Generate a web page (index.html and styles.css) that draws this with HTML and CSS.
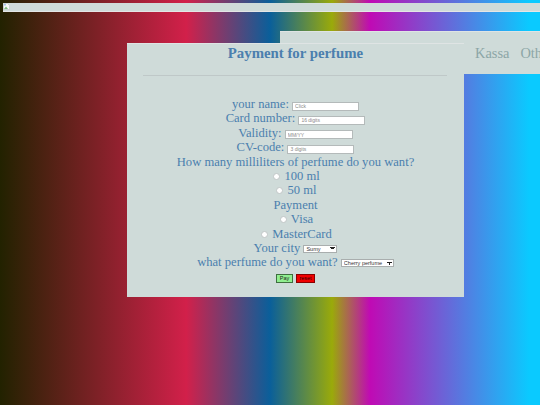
FILE: index.html
```html
<html lang="en">
<head>
    <meta charset="utf-8">
    <link rel="stylesheet" href="styles.css">
</head>
<body>
    <div class="top-bar">
        <!-- broken image icon -->
        <svg class="broken-icon" width="7" height="7" viewBox="0 0 7 7">
            <path d="M0.5 0.5H4.5L6.5 2.5V6.5H0.5Z" fill="#f7f9f7" stroke="#b4bcbc" stroke-width="0.5"/>
            <path d="M1 6L3 3.5L5 6Z" fill="#7dbb7d"/>
            <rect x="1" y="1" width="2" height="1.5" fill="#a5c2ea"/>
        </svg>
    </div>

    <div class="nav-panel">
        <a class="nav-link">Kassa</a>
        <a class="nav-link">Other</a>
    </div>

    <form class="pay-panel">
        <h1 class="pay-title">Payment for perfume</h1>
        <hr class="pay-line">

        <div class="row">your name: <input class="text-field field-name" type="text" placeholder="Click"></div>
        <div class="row">Card number: <input class="text-field field-card" type="text" placeholder="16 digits"></div>
        <div class="row">Validity: <input class="text-field field-valid" type="text" placeholder="MM/YY"></div>
        <div class="row">CV-code: <input class="text-field field-cv" type="text" placeholder="3 digits"></div>
        <div class="row">How many milliliters of perfume do you want?</div>
        <div class="row"><span class="radio"></span> 100 ml</div>
        <div class="row"><span class="radio"></span> 50 ml</div>
        <div class="row">Payment</div>
        <div class="row"><span class="radio"></span> Visa</div>
        <div class="row"><span class="radio"></span> MasterCard</div>
        <div class="row">Your city
            <select class="pick pick-city"><option>Sumy</option></select>
        </div>
        <div class="row">what perfume do you want?
            <select class="pick pick-perfume"><option>Cherry perfume</option></select>
        </div>

        <div class="buttons">
            <button class="btn btn-pay" type="button">Pay</button>
            <button class="btn btn-reset" type="button">reset</button>
        </div>
    </form>
</body>
</html>
```

FILE: styles.css
```css
html, body {
    height: 405px;
}
body {
    margin: 0;
    position: relative;
    overflow: hidden;
    font-family: "Liberation Serif", serif;
    background: linear-gradient(to right, #222200 0%, #d2204a 34.5%, #0a5f9a 50%, #9aaa0a 61.5%, #c00ab4 68.5%, #0acaff 98%);
}
.top-bar {
    height: 8px;
    margin: 3px 0 0 3px;
    background-color: #cfdbd9;
    border-bottom: 1px solid #e4e6e6;
    line-height: 0;
}
.broken-icon {
    display: block;
}
.nav-panel {
    position: absolute;
    top: 31px;
    left: 280px;
    width: 260px;
    height: 43px;
    box-sizing: border-box;
    padding: 13px 0 0 195px;
    display: flex;
    gap: 11px;
    white-space: nowrap;
    overflow: hidden;
    background-color: #cfdbd9;
    border-top: 1px solid #dfe4e4;
    font-size: 14.4px;
    color: #8ca6a6;
}
.pay-panel {
    position: relative;
    box-sizing: border-box;
    width: 337px;
    height: 254px;
    margin: 31px 0 0 127px;
    background-color: #cfdbd9;
    border-top: 1px solid #dfe4e4;
    text-align: center;
    color: #4b7fae;
    font-size: 12.6px;
    line-height: 14.4px;
}
.pay-title {
    margin: 0;
    padding-top: 1px;
    font-size: 14.8px;
    line-height: 16px;
    font-weight: bold;
    color: #4b7fae;
}
.pay-line {
    width: 304px;
    margin: 14px 0 21px 16px;
    border: 0;
    border-top: 1px solid #bfc8c8;
}
.row {
    height: 14.4px;
    white-space: nowrap;
}
.text-field {
    box-sizing: border-box;
    height: 9px;
    padding: 0 2px;
    background-color: #fff;
    border: 1px solid #b4baba;
    font-family: "Liberation Sans", sans-serif;
    font-size: 5px;
    vertical-align: 0;
}
.text-field::placeholder {
    color: #8a8a8a;
}
.field-name, .field-card {
    width: 67px;
}
.field-valid {
    width: 68px;
}
.field-cv {
    width: 67px;
}
.radio {
    display: inline-block;
    width: 5px;
    height: 5px;
    margin: 0 1px 0 2px;
    border-radius: 50%;
    background-color: #fff;
    border: 0.5px solid #c0c6c6;
}
.pick {
    appearance: none;
    box-sizing: border-box;
    height: 8px;
    padding: 0 6px 0 2px;
    border: 1px solid #a9aeae;
    font-family: "Liberation Sans", sans-serif;
    font-size: 5.5px;
    line-height: 6px;
    color: #333;
    vertical-align: 1px;
    /* small arrow made of two slanted gradients */
    background-color: #fff;
    background-image: linear-gradient(45deg, transparent 50%, #222 50%), linear-gradient(-45deg, transparent 50%, #222 50%);
    background-size: 3px 3px;
    background-position: right 3px center, right 0.5px center;
    background-repeat: no-repeat;
}
.pick-city {
    width: 34px;
}
.pick-perfume {
    width: 53px;
}
.buttons {
    display: flex;
    justify-content: center;
    gap: 3px;
    margin-top: 4px;
}
.btn {
    height: 9px;
    padding: 0;
    overflow: visible;
    font-family: "Liberation Sans", sans-serif;
    font-size: 5.5px;
    line-height: 5px;
    color: #222;
}
.btn-pay {
    width: 17px;
    background-color: #90ee90;
    border: 1px solid #3f6f3f;
}
.btn-reset {
    width: 19px;
    background-color: #f00000;
    border: 1px solid #8a0000;
    color: #300000;
}
```
